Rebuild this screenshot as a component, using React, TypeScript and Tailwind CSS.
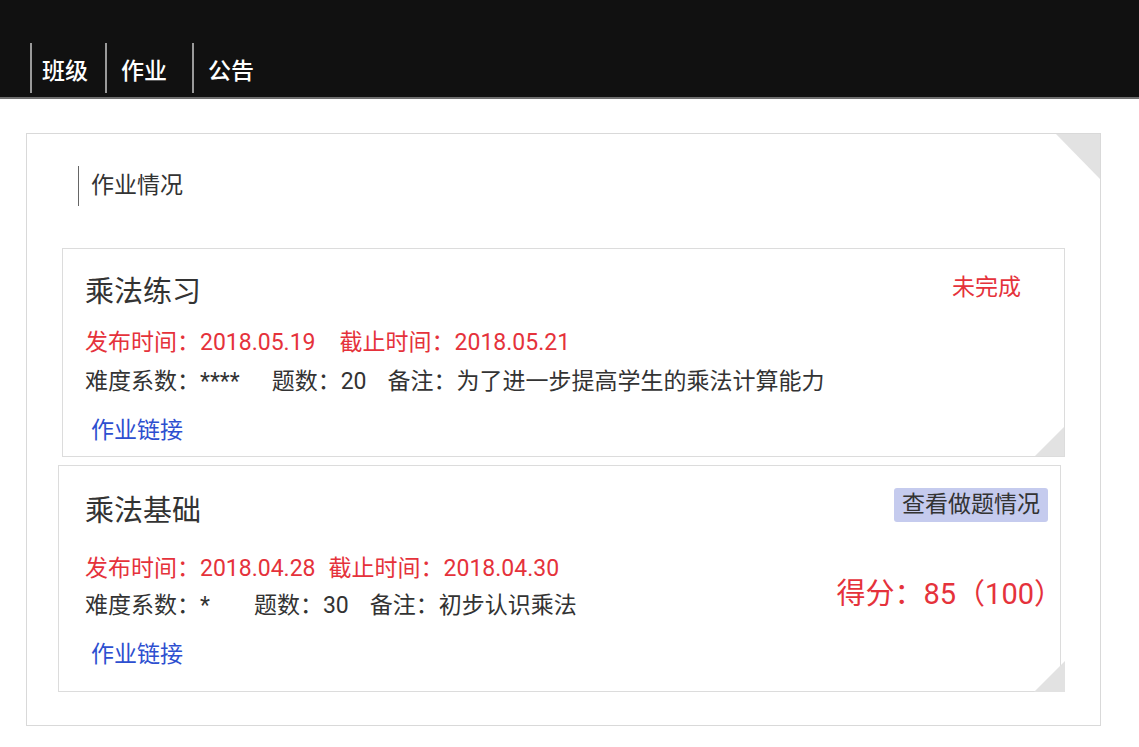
import React from "react";

const font = { fontFamily: 'Roboto, "Noto Sans CJK SC", sans-serif' };

type Homework = {
  title: string;
  publish: string;
  deadline: string;
  difficulty: string;
  count: number;
  note: string;
  done: boolean;
  score?: string;
};

const list: Homework[] = [
  {
    title: "乘法练习",
    publish: "2018.05.19",
    deadline: "2018.05.21",
    difficulty: "****",
    count: 20,
    note: "为了进一步提高学生的乘法计算能力",
    done: false,
  },
  {
    title: "乘法基础",
    publish: "2018.04.28",
    deadline: "2018.04.30",
    difficulty: "*",
    count: 30,
    note: "初步认识乘法",
    done: true,
    score: "85（100）",
  },
];

function Corner({ className }: { className: string }) {
  return (
    <svg className={className} viewBox="0 0 10 10" preserveAspectRatio="none">
      <polygon points="10,0 10,10 0,10" fill="#e2e2e2" />
    </svg>
  );
}

function HomeworkCard({ hw, first }: { hw: Homework; first: boolean }) {
  return (
    <div
      className={
        first
          ? "relative ml-[35px] mr-[35px] h-[209px] border border-[#dcdcdc] bg-white"
          : "relative ml-[31px] mr-[39px] mt-[8px] h-[227px] border border-[#dcdcdc] bg-white"
      }
    >
      <div className={first ? "flex pl-[22px] pr-[43px] pt-[23px]" : "flex pl-[26px] pr-[12px] pt-[25px]"}>
        <div className="flex-1 whitespace-nowrap">
          <h3 className="text-[29px] leading-[40px] text-[#333]">{hw.title}</h3>
          <p
            className={
              first
                ? "mt-[16px] text-[23px] leading-[30px] text-[#e5323b]"
                : "mt-[23px] text-[23px] leading-[30px] text-[#e5323b]"
            }
          >
            发布时间：{hw.publish}
            <span className={first ? "ml-[24px]" : "ml-[13px]"}>截止时间：{hw.deadline}</span>
          </p>
          <p className={first ? "mt-[9px] text-[23px] leading-[30px] text-[#333]" : "mt-[7px] text-[23px] leading-[30px] text-[#333]"}>
            难度系数：{hw.difficulty}
            <span className={first ? "ml-[32px]" : "ml-[44px]"}>题数：{hw.count}</span>
            <span className="ml-[21px]">备注：{hw.note}</span>
          </p>
          <a className="mt-[19px] ml-[6px] inline-block text-[23px] leading-[30px] text-[#2d4fd0]">作业链接</a>
        </div>
        <div className="flex flex-col items-end">
          {hw.done ? (
            <>
              <span className="mt-[-3px] rounded-[3px] bg-[#c5cbee] px-[8px] text-[23px] leading-[34px] text-[#333]">
                查看做题情况
              </span>
              <span className="mr-[-15px] mt-[54px] text-[29px] leading-[36px] text-[#e5323b]">得分：{hw.score}</span>
            </>
          ) : (
            <span className="mt-[1px] text-[23px] leading-[30px] text-[#e5323b]">未完成</span>
          )}
        </div>
      </div>
      <Corner
        className={
          first
            ? "absolute bottom-0 right-0 h-[29px] w-[29px]"
            : "absolute bottom-[-1px] right-[-5px] h-[31px] w-[31px]"
        }
      />
    </div>
  );
}

export default function App() {
  return (
    <div className="min-h-[747px] bg-white" style={font}>
      <header className="flex h-[99px] items-end border-b-2 border-[#6f6f6f] bg-[#111111] pb-[4px]">
        <nav className="flex text-[23px] font-medium text-white">
          <a className="ml-[30px] flex h-[50px] w-[75px] items-end border-l-2 border-[#9a9a9a] pb-[4px] pl-[10px] leading-[34px]">
            班级
          </a>
          <a className="flex h-[50px] w-[87px] items-end border-l-2 border-[#9a9a9a] pb-[4px] pl-[14px] leading-[34px]">
            作业
          </a>
          <a className="flex h-[50px] items-end border-l-2 border-[#9a9a9a] pb-[4px] pl-[14px] leading-[34px]">
            公告
          </a>
        </nav>
      </header>

      <main className="relative ml-[26px] mt-[34px] h-[593px] w-[1075px] border border-[#d9d9d9] bg-white">
        <svg className="absolute right-0 top-0 h-[45px] w-[44px]" viewBox="0 0 10 10" preserveAspectRatio="none">
          <polygon points="0,0 10,0 10,10" fill="#e2e2e2" />
        </svg>
        <div className="ml-[51px] mt-[32px] flex h-[40px] items-center border-l border-[#666] pl-[12px] text-[23px] text-[#333]">
          作业情况
        </div>
        <div className="mt-[42px]">
          {list.map((hw, i) => (
            <HomeworkCard key={hw.title} hw={hw} first={i === 0} />
          ))}
        </div>
      </main>
    </div>
  );
}
